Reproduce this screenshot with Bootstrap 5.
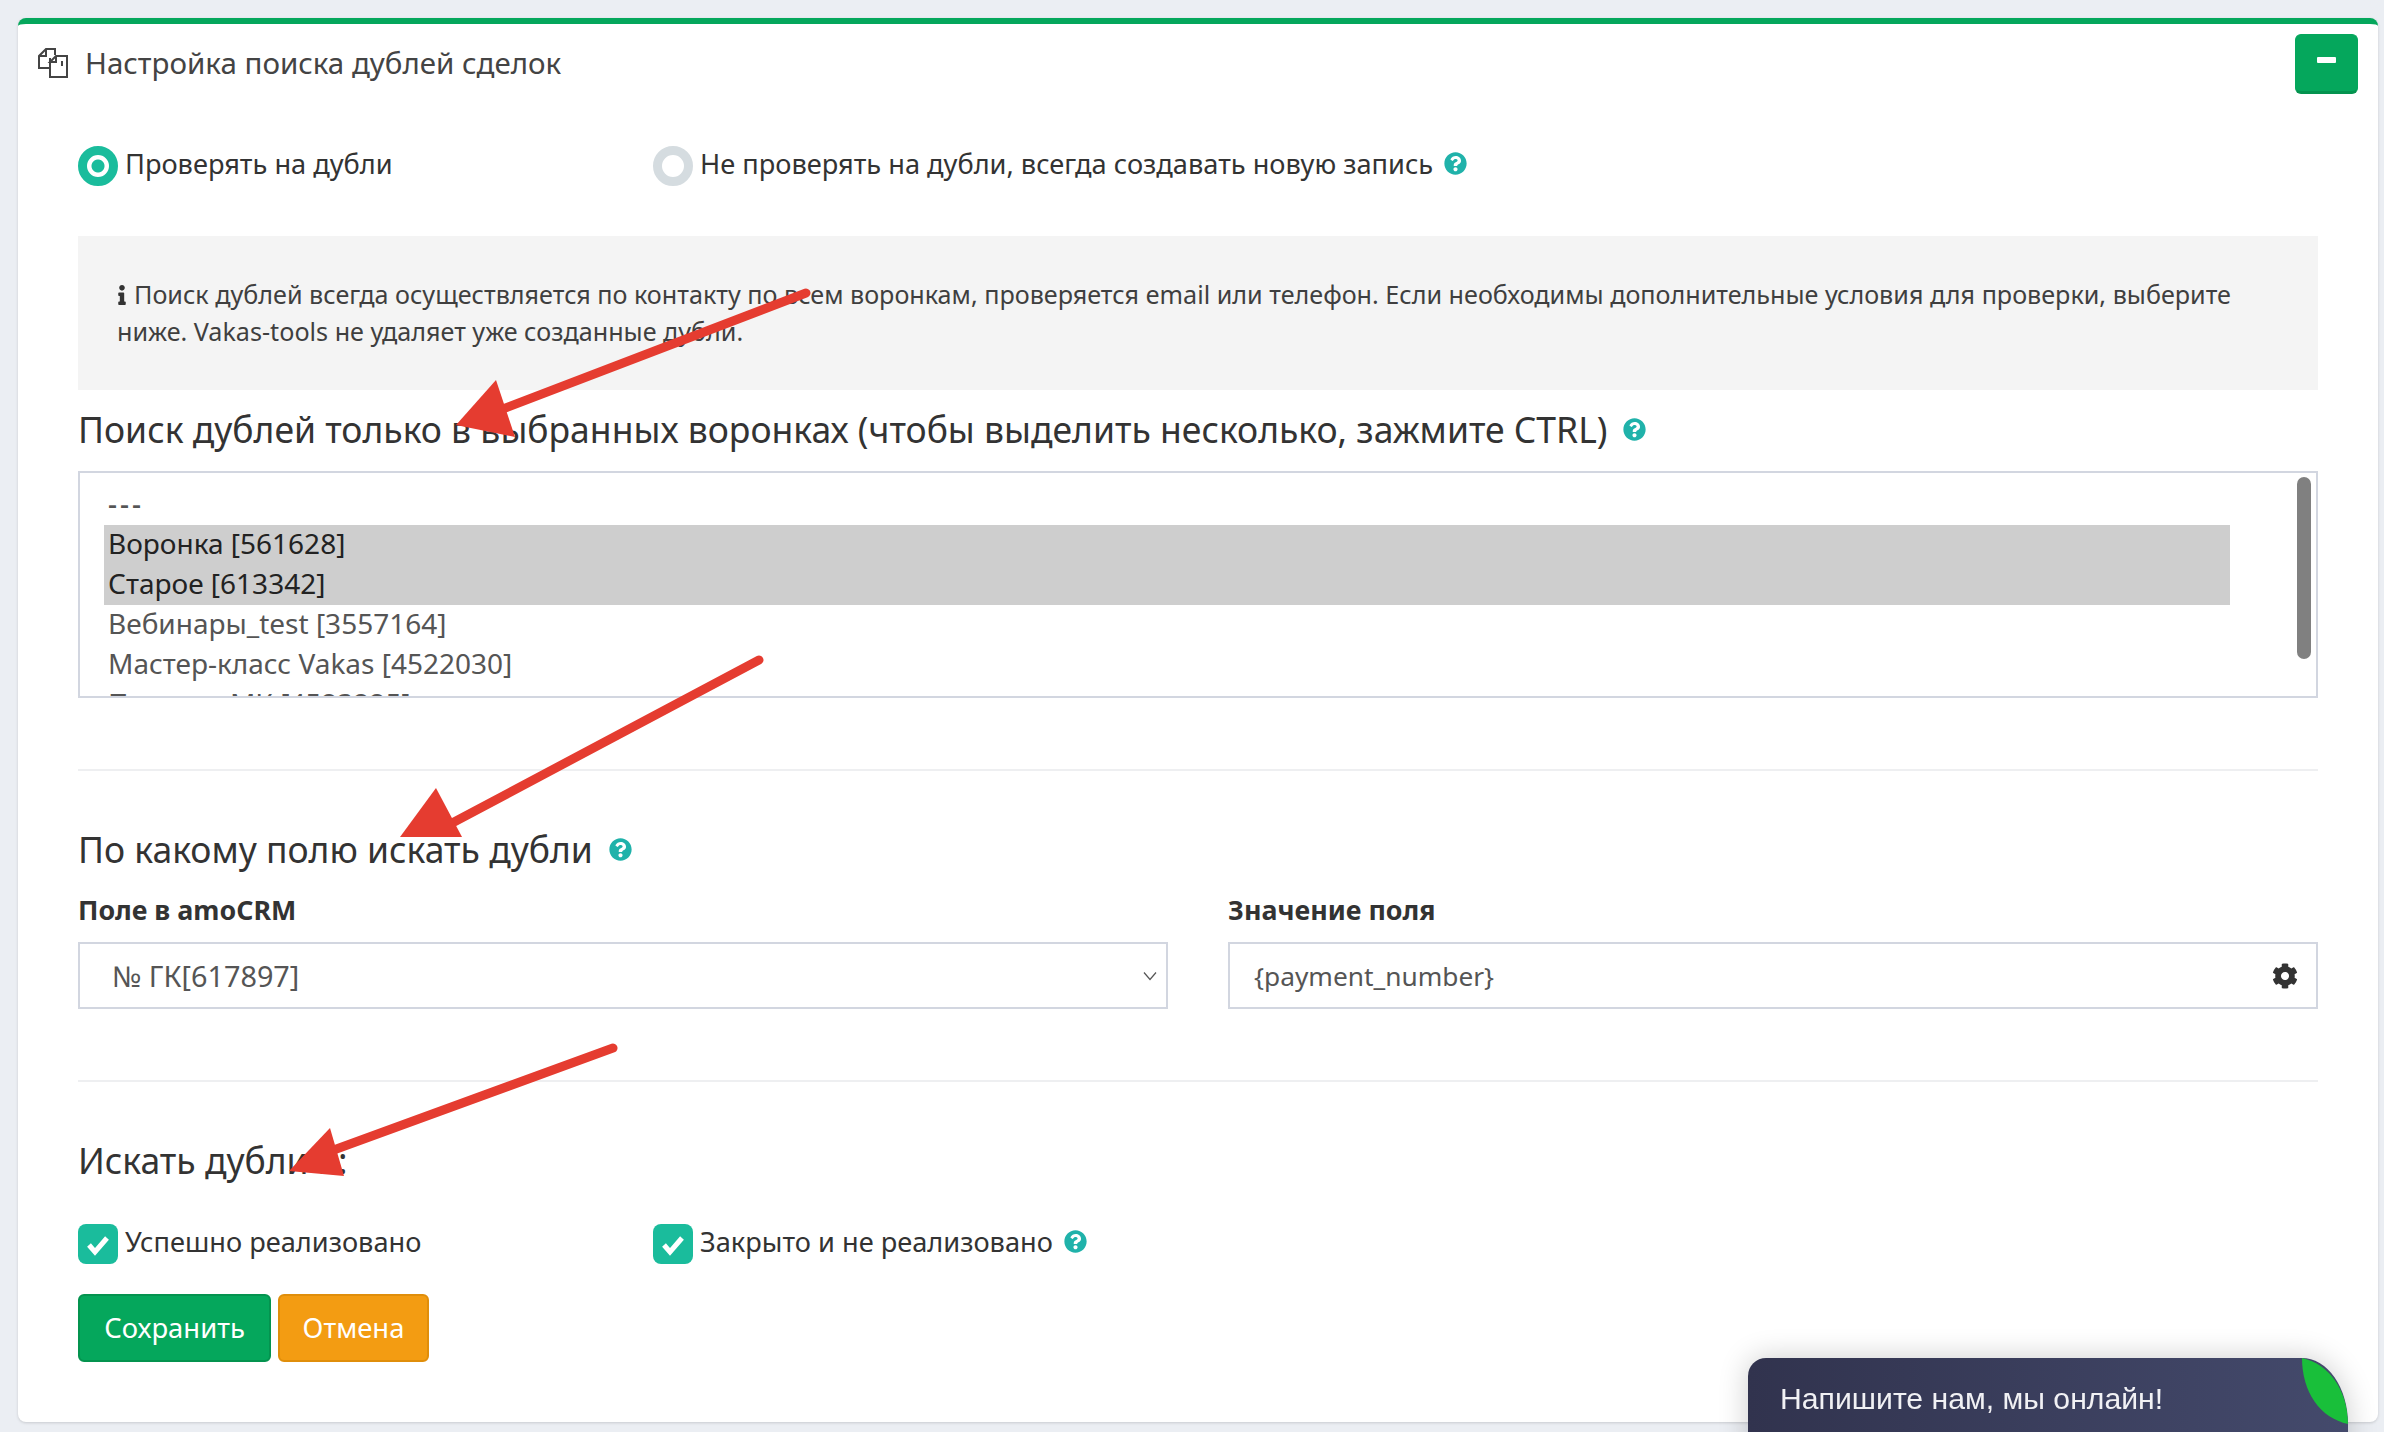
<!DOCTYPE html>
<html lang="ru">
<head>
<meta charset="utf-8">
<title>Настройка поиска дублей сделок</title>
<link href="https://cdn.jsdelivr.net/npm/bootstrap@5.3.0/dist/css/bootstrap.min.css" rel="stylesheet">
<style>
html,body{height:1432px;overflow:hidden}
body{background:#ebeef3;font-family:"Noto Sans",sans-serif;font-size:27.2px;line-height:37px;color:#333;padding:18px 6px 10px 18px;position:relative}
.dup-card{background:#fff;border:0;border-top:6px solid #05a75c;border-radius:8px;box-shadow:0 1px 3px rgba(0,0,0,.15);height:1404px;--bs-card-bg:#fff}
.dup-head{padding:10px 20px 0 20px;height:70px}
.dup-title{font-size:29.5px;color:#444;display:flex;align-items:center;gap:17px;margin-top:-6px}
.dup-min{width:63px;height:60px;background:#05a75c;border:1px solid #05a75c;border-bottom:3px solid #04934f;border-radius:6px;padding:0;display:flex;align-items:center;justify-content:center}
.dup-min i{display:block;width:19px;height:6px;background:#fff;border-radius:1px;margin-top:-6px}
.dup-body{padding:52px 60px 0}
.dup-row{--bs-gutter-x:60px}
.dup-choice{display:flex;align-items:center;gap:7px;height:40px;margin:0}
.dup-choice span.lbl{margin-top:-6px}
.dup-radio{appearance:none;width:40px;height:40px;border-radius:50%;border:9px solid #d5dce0;background:#fff;flex:none;margin:0}
.dup-radio:checked{border-color:#1abc9c;background:radial-gradient(circle,#1abc9c 0 6px,#fff 7px)}
.dup-tick{width:40px;height:40px;border-radius:8px;background:#1abc9c;display:flex;align-items:center;justify-content:center;flex:none}
.dup-help{width:23px;height:23px;fill:#20b2aa;flex:none}
.dup-choice .dup-help{margin-bottom:6px}
.dup-note{background:#f4f4f4;margin-top:50px;padding:40px 39px;font-size:25.15px;color:#3f3f3f;height:154px}
.dup-note svg{width:10px;height:20px;fill:#333;vertical-align:-1px;margin-right:7px}
.dup-h{font-size:35.5px;line-height:41px;font-weight:400;color:#333;margin:0;display:flex;align-items:center;gap:16px}
.dup-list{height:227px;border:2px solid #d2d6e0;padding:12px 0 0 24px;overflow:hidden;position:relative;color:#555;font-size:28px;margin-top:21px}
.dup-opt{height:40px;line-height:36px;padding-left:4px;margin-right:86px;white-space:nowrap}
.dup-opt.on{background:#cecece;color:#222}
.dup-dash{letter-spacing:3px;font-weight:500}
.dup-thumb{position:absolute;top:4px;right:5px;width:14px;height:182px;background:#808080;border-radius:7px}
.dup-hr{border:0;height:2px;background:#eeeff1;opacity:1;margin:0}
.dup-gap-hr{margin-top:71px}
.dup-gap-h{margin-top:58px}
.dup-gap-h2{margin-top:58px}
.dup-gap-fields{margin-top:23px}
.dup-gap-checks{margin-top:43px}
.dup-gap-btns{margin-top:30px;gap:7px}
.dup-w1{margin-top:19px}
.dup-label{font-weight:700;font-size:26.8px;line-height:33px;color:#333;margin:0 0 16px;display:block}
.dup-input{height:67px;border:2px solid #d2d6e0;border-radius:0;font-size:26.3px;color:#555;padding:0 56px 0 24px;box-shadow:none}
.form-select.dup-input{font-size:28.8px;padding-left:32px;background-image:url("data:image/svg+xml,%3Csvg xmlns='http://www.w3.org/2000/svg' viewBox='0 0 16 10'%3E%3Cpath d='M2 1.5l6 7 6-7' fill='none' stroke='%23555' stroke-width='1.2'/%3E%3C/svg%3E");background-size:16px 10px;background-position:right 8px center}
.dup-gear{position:absolute;right:50px;top:70px;width:26px;height:26px;fill:#333}
.dup-btn{height:68px;font-size:27.4px;color:#fff;border-radius:6px;padding:0;border-width:2px;line-height:1}
.dup-save{width:193px;background:#05a75c;border-color:#04934f}
.dup-cancel{width:151px;background:#f39c12;border-color:#e08e0b}
.dup-arrows{position:absolute;left:0;top:0;width:2384px;height:1432px;pointer-events:none}
.dup-chat{position:fixed;left:1748px;top:1358px;width:600px;height:100px;background:linear-gradient(90deg,#31334e,#444a6c);border-radius:18px 46px 0 0/18px 66px 0 0;box-shadow:0 0 30px rgba(0,0,0,.2);color:#f1f1f4;font-family:"Liberation Sans",sans-serif;font-size:30.2px;line-height:34px;padding:24px 0 0 32px;overflow:hidden}
.dup-leaf{position:absolute;left:554px;top:0;width:46px;height:66px;fill:#19bf3a}
</style>
</head>
<body>
<svg width="0" height="0" class="d-block position-absolute">
<symbol id="ic-q" viewBox="0 0 512 512"><path d="M504 256c0 136.997-111.043 248-248 248S8 392.997 8 256C8 119.083 119.043 8 256 8s248 111.083 248 248zM262.655 90c-54.497 0-89.255 22.957-116.549 63.758-3.536 5.286-2.353 12.415 2.715 16.258l34.699 26.31c5.205 3.947 12.621 3.008 16.665-2.122 17.864-22.658 30.113-35.797 57.303-35.797 20.429 0 45.698 13.148 45.698 32.958 0 14.976-12.363 22.667-32.534 33.976C247.128 238.528 216 254.941 216 296v4c0 6.627 5.373 12 12 12h56c6.627 0 12-5.373 12-12v-1.333c0-28.462 83.186-29.647 83.186-106.667 0-58.002-60.165-102-116.531-102zM256 338c-25.365 0-46 20.635-46 46 0 25.364 20.635 46 46 46s46-20.636 46-46c0-25.365-20.635-46-46-46z"/></symbol>
<symbol id="ic-t" viewBox="0 0 40 40"><path d="M11 21l6 7 12-14" fill="none" stroke="#fff" stroke-width="5"/></symbol>
</svg>

<div class="card dup-card">
  <div class="dup-head d-flex justify-content-between align-items-start">
    <div class="dup-title pt-3">
      <svg width="30" height="30" viewBox="0 0 30 30" fill="none" stroke="#444" stroke-width="2"><path d="M1 15V8l7-7h9v6M8 1v7H1M1 15v5h11"/><path d="M12 10v19h17V8H18l-6 6h6V8M24 13v5"/></svg>
      <span>Настройка поиска дублей сделок</span>
    </div>
    <button class="btn dup-min" type="button" aria-label="Свернуть"><i></i></button>
  </div>
  <div class="dup-body">
    <div class="row dup-row">
      <div class="col-3"><label class="dup-choice"><input class="dup-radio" type="radio" name="m" checked><span class="lbl">Проверять на дубли</span></label></div>
      <div class="col-9"><label class="dup-choice"><input class="dup-radio" type="radio" name="m"><span class="lbl">Не проверять на дубли, всегда создавать новую запись</span><svg class="dup-help ms-1"><use href="#ic-q"/></svg></label></div>
    </div>
    <div class="dup-note"><svg viewBox="0 0 192 512"><path d="M20 424.229h20V279.771H20c-11.046 0-20-8.954-20-20V212c0-11.046 8.954-20 20-20h112c11.046 0 20 8.954 20 20v212.229h20c11.046 0 20 8.954 20 20V492c0 11.046-8.954 20-20 20H20c-11.046 0-20-8.954-20-20v-47.771c0-11.046 8.954-20 20-20zM96 0C56.235 0 24 32.235 24 72s32.235 72 72 72 72-32.235 72-72S135.764 0 96 0z"/></svg>Поиск дублей всегда осуществляется по контакту по всем воронкам, проверяется email или телефон. Если необходимы дополнительные условия для проверки, выберите ниже. Vakas-tools не удаляет уже созданные дубли.</div>
    <h4 class="dup-h dup-w1">Поиск дублей только в выбранных воронках (чтобы выделить несколько, зажмите CTRL)<svg class="dup-help"><use href="#ic-q"/></svg></h4>
    <div class="dup-list">
      <div class="dup-opt dup-dash">---</div>
      <div class="dup-opt on">Воронка [561628]</div>
      <div class="dup-opt on">Старое [613342]</div>
      <div class="dup-opt">Вебинары_test [3557164]</div>
      <div class="dup-opt">Мастер-класс Vakas [4522030]</div>
      <div class="dup-opt">Прогрев МК [4523225]</div>
      <div class="dup-thumb"></div>
    </div>
    <hr class="dup-hr dup-gap-hr">
    <h4 class="dup-h dup-gap-h">По какому полю искать дубли<svg class="dup-help"><use href="#ic-q"/></svg></h4>
    <div class="row dup-row dup-gap-fields">
      <div class="col-6"><label class="dup-label">Поле в amoCRM</label><select class="form-select dup-input"><option>№ ГК[617897]</option></select></div>
      <div class="col-6 position-relative"><label class="dup-label">Значение поля</label><input class="form-control dup-input" value="{payment_number}">
        <svg class="dup-gear" viewBox="0 0 512 512"><path d="M487.4 315.7l-42.6-24.6c4.3-23.2 4.3-47 0-70.2l42.6-24.6c4.9-2.8 7.1-8.6 5.5-14-11.1-35.6-30-67.8-54.7-94.6-3.8-4.1-10-5.1-14.8-2.3L380.8 110c-17.9-15.4-38.5-27.3-60.8-35.1V25.8c0-5.6-3.9-10.5-9.4-11.7-36.7-8.2-74.3-7.8-109.2 0-5.5 1.2-9.4 6.1-9.4 11.7V75c-22.2 7.9-42.8 19.8-60.8 35.1L88.7 85.5c-4.9-2.8-11-1.9-14.8 2.3-24.7 26.7-43.6 58.9-54.7 94.6-1.7 5.4.6 11.2 5.5 14L67.3 221c-4.3 23.2-4.3 47 0 70.2l-42.6 24.6c-4.9 2.8-7.1 8.6-5.5 14 11.1 35.6 30 67.8 54.7 94.6 3.8 4.1 10 5.1 14.8 2.3l42.6-24.6c17.9 15.4 38.5 27.3 60.8 35.1v49.2c0 5.6 3.9 10.5 9.4 11.7 36.7 8.2 74.3 7.8 109.2 0 5.5-1.2 9.4-6.1 9.4-11.7v-49.2c22.2-7.9 42.8-19.8 60.8-35.1l42.6 24.6c4.9 2.8 11 1.9 14.8-2.3 24.7-26.7 43.6-58.9 54.7-94.6 1.5-5.5-.7-11.3-5.6-14.1zM256 336c-44.1 0-80-35.9-80-80s35.9-80 80-80 80 35.9 80 80-35.9 80-80 80z"/></svg>
      </div>
    </div>
    <hr class="dup-hr dup-gap-hr">
    <h4 class="dup-h dup-gap-h2">Искать дубли в:</h4>
    <div class="row dup-row dup-gap-checks">
      <div class="col-3"><label class="dup-choice"><span class="dup-tick"><svg width="40" height="40"><use href="#ic-t"/></svg></span><span class="lbl">Успешно реализовано</span></label></div>
      <div class="col-9"><label class="dup-choice"><span class="dup-tick"><svg width="40" height="40"><use href="#ic-t"/></svg></span><span class="lbl">Закрыто и не реализовано</span><svg class="dup-help ms-1"><use href="#ic-q"/></svg></label></div>
    </div>
    <div class="d-flex dup-gap-btns">
      <button class="btn dup-btn dup-save" type="button">Сохранить</button>
      <button class="btn dup-btn dup-cancel" type="button">Отмена</button>
    </div>
  </div>
</div>

<svg class="dup-arrows" viewBox="0 0 2384 1432">
  <g fill="#e53c30" stroke="#e53c30" stroke-linecap="round">
    <path d="M806 293L495 412" stroke-width="9" fill="none"/><path d="M456 425L496 380 515 437z" stroke="none"/>
    <path d="M759 660L439 830" stroke-width="9" fill="none"/><path d="M400 837L436 788 462 837z" stroke="none"/>
    <path d="M613 1048L320 1155" stroke-width="9" fill="none"/><path d="M289 1171L330 1128 344 1176z" stroke="none"/>
  </g>
</svg>

<div class="dup-chat">Напишите нам, мы онлайн!
  <svg class="dup-leaf" viewBox="0 0 46 66"><path d="M0 0C28 6 46 34 46 66 18 60 0 34 0 0z"/></svg>
</div>
</body>
</html>
